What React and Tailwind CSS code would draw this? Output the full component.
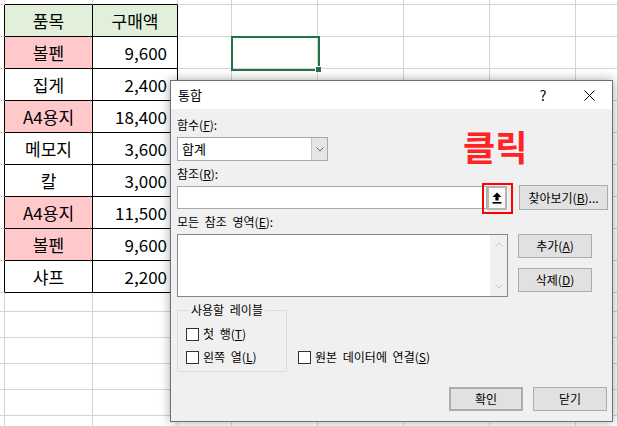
import React from 'react';

// 시트 격자 크기 (열 너비 / 행 높이)
const COLS = ['w-[5px]', 'w-[88px]', 'w-[85px]', 'w-[54px]', 'w-[86px]', 'w-[86px]', 'w-[86px]', 'w-[86px]', 'flex-1'];
const ROWS = ['h-[5px]', 'h-[32px]', 'h-[32px]', 'h-[32px]', 'h-[32px]', 'h-[32px]', 'h-[32px]', 'h-[32px]', 'h-[32px]', 'h-[32px]', 'h-[19px]', 'h-[26px]', 'h-[26px]', 'h-[26px]', 'h-[26px]', 'h-[26px]'];

const DATA = [
  ['품목', '구매액'],
  ['볼펜', '9,600'],
  ['집게', '2,400'],
  ['A4용지', '18,400'],
  ['메모지', '3,600'],
  ['칼', '3,000'],
  ['A4용지', '11,500'],
  ['볼펜', '9,600'],
  ['샤프', '2,200'],
];
const PINK = [1, 3, 6, 7];

const inTable = (r, c) => r >= 1 && r <= 9 && c >= 1 && c <= 2;

function Cell({ r, c }) {
  const right = inTable(r, c) || inTable(r, c + 1) ? 'border-r-black' : 'border-r-[#d4d4d4]';
  const bottom = inTable(r, c) || inTable(r + 1, c) ? 'border-b-black' : 'border-b-[#d4d4d4]';
  let bg = 'bg-white';
  let text = null;
  let align = 'justify-center';
  if (inTable(r, c)) {
    const row = r - 1;
    text = DATA[row][c - 1];
    if (row === 0) bg = 'bg-[#e2efda]';
    else if (c === 1 && PINK.includes(row)) bg = 'bg-[#ffc9cc]';
    if (row > 0 && c === 2) align = 'justify-end pr-[10px]';
  }
  const selected = r === 2 && c === 4;
  return (
    <div className={`${COLS[c]} h-full shrink-0 border-r border-b ${right} ${bottom} ${bg} flex items-center ${align} relative`}>
      {text}
      {selected && (
        <div className="absolute z-10 -left-px -top-px w-[89px] h-[35px] border-2 border-[#217346]">
          <div className="absolute -right-[4px] -bottom-[4px] w-[7px] h-[7px] bg-[#217346] border border-white" />
        </div>
      )}
    </div>
  );
}

function Sheet() {
  return (
    <div className="flex flex-col text-[17px] text-black">
      {ROWS.map((h, r) => (
        <div key={r} className={`flex ${h}`}>
          {COLS.map((w, c) => (
            <Cell key={c} r={r} c={c} />
          ))}
        </div>
      ))}
    </div>
  );
}

function Chevron({ up, color = '#606060' }) {
  return (
    <svg width="8" height="5" viewBox="0 0 8 5">
      <polyline
        points={up ? '0.5,4.5 4,1 7.5,4.5' : '0.5,0.5 4,4 7.5,0.5'}
        fill="none"
        stroke={color}
        strokeWidth="1"
      />
    </svg>
  );
}

function UploadIcon() {
  return (
    <svg width="10" height="12" viewBox="0 0 10 12">
      <polygon points="5,0.5 9.5,5 6.6,5 6.6,8.6 3.4,8.6 3.4,5 0.5,5" fill="#000" />
      <rect x="0.5" y="10" width="9" height="1.6" fill="#000" />
    </svg>
  );
}

function Check({ children }) {
  return (
    <div className="flex items-center h-[16px]">
      <div className="w-[13px] h-[13px] shrink-0 border border-[#333333] bg-white" />
      <span className="ml-[4px] whitespace-nowrap">{children}</span>
    </div>
  );
}

function Btn({ children, className = '' }) {
  return (
    <div className={`h-[24px] flex items-center justify-center whitespace-nowrap bg-[#e1e1e1] border border-[#adadad] ${className}`}>
      {children}
    </div>
  );
}

function Dialog() {
  return (
    <div className="absolute z-20 left-[170px] top-[80px] w-[443px] h-[342px] border border-[#707070] bg-[#f0f0f0] flex flex-col shadow-[0_0_10px_rgba(0,0,0,0.35)] text-[12px] leading-[16px] text-black [word-spacing:3px]">
      {/* 제목 표시줄 */}
      <div className="h-[28px] bg-white flex items-center">
        <span className="pl-[7px] text-[13px] flex-1">통합</span>
        <div className="w-[46px] flex justify-center text-[14px]">?</div>
        <div className="w-[46px] flex justify-center">
          <svg width="11" height="11" viewBox="0 0 11 11">
            <path d="M0.5 0.5 L10.5 10.5 M10.5 0.5 L0.5 10.5" stroke="#000" strokeWidth="1" />
          </svg>
        </div>
      </div>

      {/* 본문 */}
      <div className="flex-1 pl-[6px] pr-[4px] relative">
        <div className="mt-[8px] h-[16px]">함수(<span className="underline">F</span>):</div>
        <div className="mt-[4px] flex h-[24px] w-[151px] border border-[#a8a8a8] bg-white">
          <div className="flex-1 pl-[4px] leading-[22px] text-[13px]">합계</div>
          <div className="w-[16px] border-l border-[#c4c4c4] bg-[#e5e5e5] flex items-center justify-center">
            <Chevron />
          </div>
        </div>

        <div className="mt-[5px] h-[16px]">참조(<span className="underline">R</span>):</div>
        <div className="mt-[3px] h-[25px] flex items-center">
          <div className="w-[310px] h-[23px] border border-[#a8a8a8] bg-white" />
          <div className="relative w-[20px] h-[24px] border-2 border-[#b4b4b4] bg-[#fafafa] flex items-center justify-center">
            <UploadIcon />
            <div className="absolute -left-[7px] -top-[5px] w-[31px] h-[31px] border-2 border-[#ff0000]" />
          </div>
          <Btn className="ml-[12px] w-[89px] h-[25px]">
            찾아보기(<span className="underline">B</span>)...
          </Btn>
        </div>

        <div className="mt-[4px] h-[16px]">모든 참조 영역(<span className="underline">E</span>):</div>
        <div className="mt-[4px] flex">
          <div className="w-[331px] h-[63px] border border-[#828790] bg-white flex justify-end">
            <div className="w-[17px] bg-[#f0f0f0] flex flex-col items-center justify-between py-[7px]">
              <Chevron up color="#c2c2c2" />
              <Chevron color="#c2c2c2" />
            </div>
          </div>
          <div className="ml-[10px] flex flex-col gap-[10px]">
            <Btn className="w-[74px]">추가(<span className="underline">A</span>)</Btn>
            <Btn className="w-[74px]">삭제(<span className="underline">D</span>)</Btn>
          </div>
        </div>

        <div className="mt-[5px] flex items-start">
          <fieldset className="w-[110px] border border-[#dcdcdc] px-[8px] pb-[6px]">
            <legend className="px-[2px] ml-[3px] leading-[16px] whitespace-nowrap">사용할 레이블</legend>
            <div className="mt-[8px]">
              <Check>첫 행(<span className="underline">T</span>)</Check>
            </div>
            <div className="mt-[7px]">
              <Check>왼쪽 열(<span className="underline">L</span>)</Check>
            </div>
          </fieldset>
          <div className="ml-[11px] mt-[47px]">
            <Check>원본 데이터에 연결(<span className="underline">S</span>)</Check>
          </div>
        </div>

        <div className="mt-[15px] flex justify-end gap-[10px] pr-[1px]">
          <Btn className="w-[74px] border-2 border-[#0078d7]">확인</Btn>
          <Btn className="w-[74px]">닫기</Btn>
        </div>

        {/* 주석 */}
        <div className="absolute left-[292px] top-[17px] text-[35px] leading-[40px] font-bold text-[#ff2424]">클릭</div>
      </div>
    </div>
  );
}

export default function App() {
  return (
    <div className="relative w-[618px] h-[426px] overflow-hidden bg-white font-['Noto_Sans_CJK_KR','Noto_Sans',sans-serif]">
      <Sheet />
      <Dialog />
    </div>
  );
}
